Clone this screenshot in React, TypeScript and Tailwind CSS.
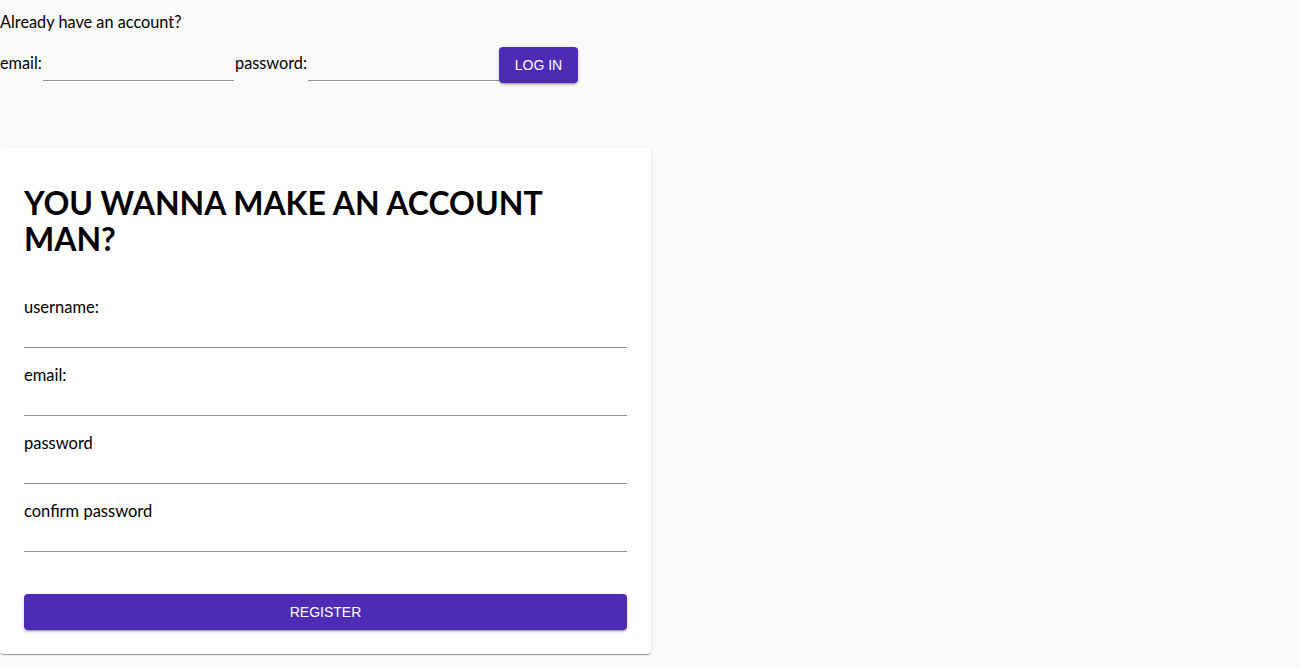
import React from 'react'

const ubuntu = "font-['Lato','Noto_Sans',sans-serif]"
const btnShadow =
  'shadow-[0_3px_1px_-2px_rgba(0,0,0,0.2),0_2px_2px_0_rgba(0,0,0,0.14),0_1px_5px_0_rgba(0,0,0,0.12)]'

function Field({ label }: { label: string }) {
  return (
    <div className="flex flex-col">
      <label className="text-[16.5px] leading-6 text-black">{label}</label>
      <input
        type="text"
        className="h-[29px] w-full border-b border-[#949494] bg-transparent outline-none"
      />
    </div>
  )
}

export default function App() {
  return (
    <main className={`min-h-screen bg-[#fafafa] text-black ${ubuntu}`}>
      <p className="pt-[10px] text-[16.3px] leading-6">Already have an account?</p>

      <form className="mt-[13px] flex items-start">
        <label className="h-8 w-[43px] text-[16.3px] leading-8">email:</label>
        <input
          type="email"
          className="h-[34px] w-[191px] border-b border-[#949494] bg-transparent outline-none"
        />
        <label className="ml-px h-8 w-[73px] text-[16.3px] leading-8">password:</label>
        <input
          type="password"
          className="h-[34px] w-[191px] border-b border-[#949494] bg-transparent outline-none"
        />
        <button
          type="button"
          className={`h-9 w-[79px] rounded bg-[#4e2bb5] font-['Liberation_Sans',Arial,sans-serif] text-sm uppercase text-white ${btnShadow}`}
        >
          Log in
        </button>
      </form>

      <section className="mt-[65px] w-[651px] rounded bg-white px-6 pb-6 pt-[37px] shadow-[0_2px_1px_-1px_rgba(0,0,0,0.2),0_1px_1px_0_rgba(0,0,0,0.14),0_1px_3px_0_rgba(0,0,0,0.12)]">
        <h1 className="text-[32px] font-bold leading-[36px]">
          YOU WANNA MAKE AN ACCOUNT MAN?
        </h1>
        <div className="mt-[38px] flex flex-col gap-[15px]">
          <Field label="username:" />
          <Field label="email:" />
          <Field label="password" />
          <Field label="confirm password" />
        </div>
        <button
          type="button"
          className={`mt-[42px] h-9 w-full rounded bg-[#4e2bb5] font-['Liberation_Sans',Arial,sans-serif] text-sm uppercase text-white ${btnShadow}`}
        >
          Register
        </button>
      </section>
    </main>
  )
}
